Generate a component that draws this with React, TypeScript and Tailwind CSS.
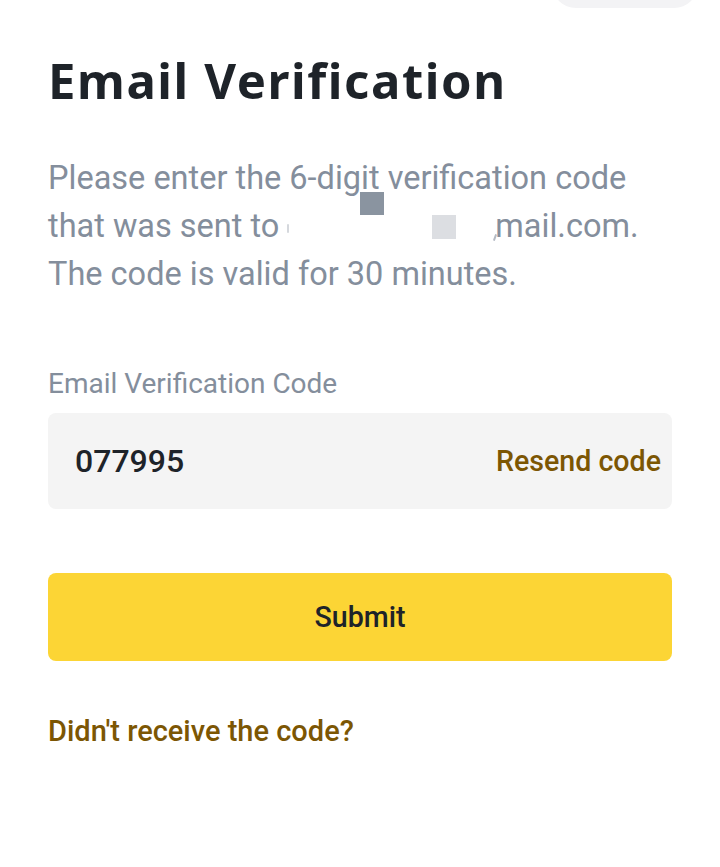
export default function App() {
  return (
    <div className="relative min-h-[867px] w-[720px] overflow-hidden bg-white font-['Roboto',sans-serif]">
      {/* partly hidden pill peeking in at the top edge */}
      <div className="absolute -top-10 left-[552px] h-[48px] w-[146px] rounded-[24px] bg-[#f3f3f5]" />

      <main className="flex flex-col gap-16 px-12 pt-[48px]">
        <header className="flex flex-col gap-[42px] pb-1">
          <h1 className="font-['Noto_Sans',sans-serif] text-[49px] font-bold leading-[64px] tracking-[1.6px] text-[#1e2329]">
            Email Verification
          </h1>

          <p className="relative text-[32.5px] leading-[48px] text-[#848e9c]">
            Please enter the 6-digit verification code
            <br />
            that was sent to
            <span className="inline-block w-[216px]">&nbsp;</span>
            mail.com.
            <br />
            The code is valid for 30 minutes.
            {/* redaction blocks and leftover glyph bits */}
            <span className="absolute left-[312px] top-[38px] h-[23px] w-[24px] bg-[#8a94a0]" />
            <span className="absolute left-[384px] top-[61px] h-[24px] w-[24px] bg-[#dcdee2]" />
            <span className="absolute left-[239px] top-[70px] h-[9px] w-[2px] rounded-full bg-[#d5d8dd]" />
            <span className="absolute left-[446px] top-[80px] h-[7px] w-[2px] rotate-[20deg] rounded-full bg-[#b4bac3]" />
          </p>
        </header>

        <form className="flex flex-col gap-16">
          <div className="flex flex-col gap-[11px]">
            <label className="text-[28px] leading-[36px] text-[#848e9c]">
              Email Verification Code
            </label>
            <div className="flex h-[96px] items-center justify-between rounded-[8px] bg-[#f4f4f4] pl-[27px] pr-[11px]">
              <span className="text-[32px] font-medium text-[#1e2329]">077995</span>
              <span className="text-[28.6px] font-medium text-[#7c5603]">Resend code</span>
            </div>
          </div>

          <button
            type="button"
            className="flex h-[88px] w-full items-center justify-center rounded-[8px] bg-[#fcd535] text-[28.6px] font-medium text-[#1e2329]"
          >
            Submit
          </button>
        </form>

        <div className="-mt-3 text-[29px] font-medium leading-[36px] text-[#7c5603]">
          Didn't receive the code?
        </div>
      </main>
    </div>
  );
}
